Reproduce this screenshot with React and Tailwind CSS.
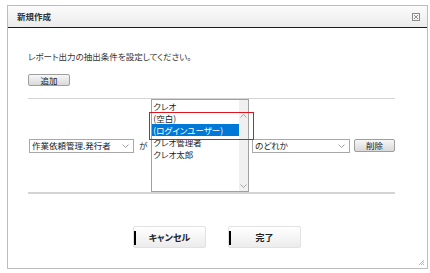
import React from "react"

const font = "font-['Noto_Sans_CJK_JP','Noto_Sans',sans-serif] [font-feature-settings:'palt']"

const Chevron = ({ up = false }) => (
  <svg width="7" height="4" viewBox="0 0 7 4" className={up ? "rotate-180" : ""}>
    <path d="M0.5 0.5 L3.5 3.5 L6.5 0.5" fill="none" stroke="#9a9a9a" strokeWidth="0.9" />
  </svg>
)

const Select = ({ label, width }) => (
  <div
    className={`${width} h-[14px] border border-[#a8a8a8] bg-white flex items-center justify-between pl-[2px] pr-[4px] text-[8.5px] leading-none text-[#222]`}
  >
    <span>{label}</span>
    <Chevron />
  </div>
)

const items = ["(空白)", "(ログインユーザー)", "クレオ管理者", "クレオ太郎"]

export default function App() {
  return (
    <div className={`w-[430px] h-[273px] bg-white pt-[5px] pl-[7px] ${font}`}>
      <div className="relative w-[421px] h-[264px] border border-[#bdbdbd] flex flex-col">
        {/* HEADER */}
        <div className="h-[22px] shrink-0 bg-gradient-to-b from-[#fbfbfb] to-[#ebebeb] border-b-[1.5px] border-[#1a1a1a] flex items-center justify-between pl-[9px] pr-[7px]">
          <span className="text-[8.5px] font-bold text-[#333] leading-none">新規作成</span>
          <div className="w-[8px] h-[8px] border border-[#8a8a8a] flex items-center justify-center">
            <svg width="6" height="6" viewBox="0 0 6 6">
              <path d="M1 1 L5 5 M5 1 L1 5" stroke="#777" strokeWidth="0.8" />
            </svg>
          </div>
        </div>

        {/* BODY */}
        <div className="pl-[20px] flex flex-col">
          <p className="mt-[22px] text-[8.5px] leading-[12px] text-[#333]">
            レポート出力の抽出条件を設定してください。
          </p>
          <button className="mt-[12px] w-[42px] h-[12px] rounded-[2px] border border-[#9e9e9e] bg-gradient-to-b from-[#f7f7f7] to-[#d9d9d9] text-[8.5px] leading-none text-[#222]">
            追加
          </button>

          <div className="mt-[12px] w-[367px] border-t border-b-2 border-[#d4d4d4] h-[96px] flex items-center">
            <div className="ml-[1px]">
              <Select label="作業依頼管理.発行者" width="w-[105px]" />
            </div>
            <span className="ml-[5px] text-[8.5px] text-[#333] leading-none">が</span>
            <div className="ml-[4px] self-start relative w-[98px] h-[93px] border border-[#a0a0a0] bg-white flex text-[8.5px] leading-[12px] text-[#222]">
              <div className="flex-1 flex flex-col">
                <div className="h-[12px] pl-[1px]">クレオ</div>
                {items.map((it, i) => (
                  <div
                    key={it}
                    className={`h-[12px] pl-[1px] ${i === 1 ? "bg-[#0078d7] text-white" : ""}`}
                  >
                    {it}
                  </div>
                ))}
              </div>
              <div className="w-[9px] bg-[#f0f0f0] flex flex-col items-center justify-between pt-[14px] pb-[3px]">
                <Chevron up />
                <Chevron />
              </div>
              {/* highlight annotation */}
              <div className="absolute left-[-3px] top-[12px] w-[105px] h-[28px] border border-[#e0141e]" />
            </div>
            <div className="ml-[3px]">
              <Select label="のどれか" width="w-[98px]" />
            </div>
            <button className="ml-[4px] w-[41px] h-[13px] rounded-[2px] border border-[#9e9e9e] bg-gradient-to-b from-[#f7f7f7] to-[#d9d9d9] text-[8.5px] leading-none text-[#222]">
              削除
            </button>
          </div>
        </div>

        {/* FOOTER BUTTONS */}
        <div className="mt-[32px] flex justify-center gap-[22px] pr-[1px]">
          {["キャンセル", "完了"].map((b) => (
            <button
              key={b}
              className="relative w-[73px] h-[22px] rounded-[2px] border border-[#e2e2e2] bg-gradient-to-b from-white to-[#ececec] text-[9px] font-bold text-[#222] leading-none flex items-center justify-center"
            >
              <span className="absolute left-0 top-[4px] w-[2px] h-[14px] bg-black" />
              {b}
            </button>
          ))}
        </div>

        {/* RESIZE GRIP */}
        <svg className="absolute right-[2px] bottom-[2px]" width="7" height="7" viewBox="0 0 7 7">
          <path d="M6 1 L1 6 M6 3 L3 6 M6 5 L5 6" stroke="#8cc4f0" strokeWidth="1" />
        </svg>
      </div>
    </div>
  )
}
